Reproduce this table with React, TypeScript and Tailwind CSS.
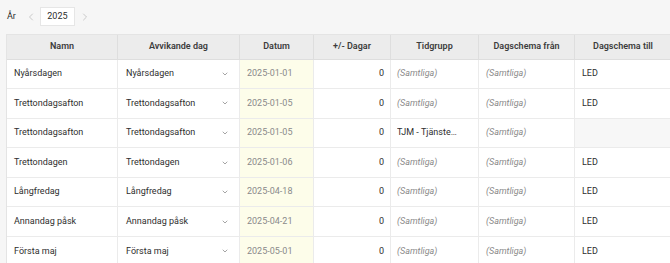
import React from 'react';
import { ChevronLeft, ChevronRight, ChevronDown } from 'lucide-react';

type Row = {
  namn: string;
  avvikande: string;
  datum: string;
  dagar: number;
  tidgrupp: string | null;
  fran: string | null;
  till: string | null;
};

const rows: Row[] = [
  { namn: 'Nyårsdagen', avvikande: 'Nyårsdagen', datum: '2025-01-01', dagar: 0, tidgrupp: null, fran: null, till: 'LED' },
  { namn: 'Trettondagsafton', avvikande: 'Trettondagsafton', datum: '2025-01-05', dagar: 0, tidgrupp: null, fran: null, till: 'LED' },
  { namn: 'Trettondagsafton', avvikande: 'Trettondagsafton', datum: '2025-01-05', dagar: 0, tidgrupp: 'TJM - Tjänstemän', fran: null, till: '' },
  { namn: 'Trettondagen', avvikande: 'Trettondagen', datum: '2025-01-06', dagar: 0, tidgrupp: null, fran: null, till: 'LED' },
  { namn: 'Långfredag', avvikande: 'Långfredag', datum: '2025-04-18', dagar: 0, tidgrupp: null, fran: null, till: 'LED' },
  { namn: 'Annandag påsk', avvikande: 'Annandag påsk', datum: '2025-04-21', dagar: 0, tidgrupp: null, fran: null, till: 'LED' },
  { namn: 'Första maj', avvikande: 'Första maj', datum: '2025-05-01', dagar: 0, tidgrupp: null, fran: null, till: 'LED' },
];

const headers = ['Namn', 'Avvikande dag', 'Datum', '+/- Dagar', 'Tidgrupp', 'Dagschema från', 'Dagschema till'];

const cols = 'grid grid-cols-[111px_122px_74px_77px_88px_96px_97px]';

function Samtliga() {
  return <span className="italic text-[#8a8a8a]">(Samtliga)</span>;
}

export default function App() {
  return (
    <div
      className="w-[670px] h-[263px] overflow-hidden bg-[#f6f6f6] text-[9px] text-[#2e2e2e]"
      style={{ fontFamily: 'Roboto, "Liberation Sans", sans-serif' }}
    >
      {/* Year picker */}
      <div className="flex items-center h-[34px] pl-[7px] pb-[1px]">
        <span>År</span>
        <ChevronLeft className="ml-[9px] text-[#b0b0b0]" size={12} strokeWidth={1.3} />
        <div className="ml-[3px] w-[35px] h-[19px] bg-white border border-[#e6e6e6] flex items-center justify-center">
          2025
        </div>
        <ChevronRight className="ml-[4px] text-[#b0b0b0]" size={12} strokeWidth={1.3} />
      </div>

      <div className="ml-[6px] border-l border-t border-[#e4e4e4] w-[700px]">
        <div className={`${cols} h-[24.5px] bg-[#ececec]`}>
          {headers.map((h) => (
            <div
              key={h}
              className="flex items-center justify-center border-r border-b border-[#dedede] font-semibold text-[#3c3c3c]"
            >
              {h}
            </div>
          ))}
        </div>

        {rows.map((r, i) => (
          <div key={i} className={`${cols} h-[29.6px] bg-white`}>
            <div className="flex items-center px-[7px] border-r border-b border-[#ebebeb]">{r.namn}</div>
            <div className="flex items-center justify-between pl-[8px] pr-[10px] border-r border-b border-[#ebebeb]">
              <span>{r.avvikande}</span>
              <ChevronDown className="text-[#777]" size={8} strokeWidth={2} />
            </div>
            <div className="flex items-center px-[7px] bg-[#fdfdea] text-[#8a8a8a] border-r border-b border-[#ebebeb]">
              {r.datum}
            </div>
            <div className="flex items-center justify-end px-[6px] border-r border-b border-[#ebebeb]">{r.dagar}</div>
            <div className="flex items-center px-[6px] border-r border-b border-[#ebebeb] min-w-0">
              {r.tidgrupp ? <span className="truncate">TJM - Tjänste…</span> : <Samtliga />}
            </div>
            <div className="flex items-center px-[7px] border-r border-b border-[#ebebeb]">
              {r.fran ? r.fran : <Samtliga />}
            </div>
            <div
              className={`flex items-center px-[7px] border-r border-b border-[#ebebeb] ${
                r.till ? '' : 'bg-[#f7f7f7]'
              }`}
            >
              {r.till}
            </div>
          </div>
        ))}
      </div>
    </div>
  );
}
